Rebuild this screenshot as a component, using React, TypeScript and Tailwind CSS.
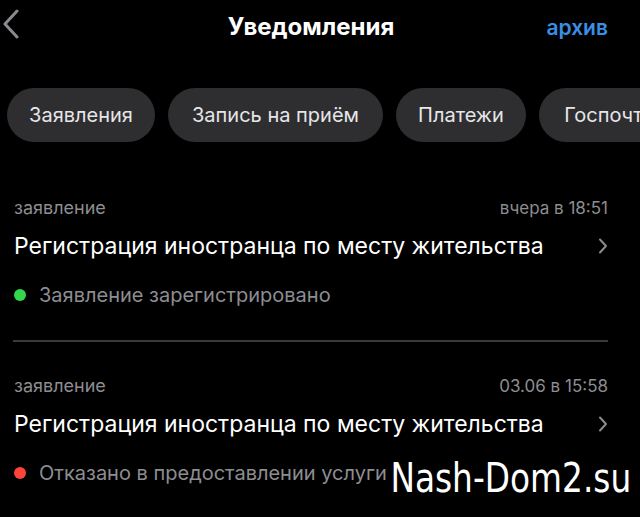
import React from "react";

function Item({ time, dot, status }: { time: string; dot: string; status: string }) {
  return (
    <div className="pl-[14px] pr-[32px]">
      <div className="flex justify-between h-[28px] text-[17px] text-[#8d8d92] leading-[28px]">
        <span className="text-[18px]">заявление</span>
        <span>{time}</span>
      </div>
      <div className="flex items-center justify-between h-[40px] mt-[4px]">
        <span className="text-[23px] text-white leading-none whitespace-nowrap">Регистрация иностранца по месту жительства</span>
        <svg width="10" height="16" viewBox="0 0 10 16" className="shrink-0">
          <path d="M2 1.5 L8 8 L2 14.5" stroke="#8a8a8f" strokeWidth="2" fill="none" strokeLinecap="round" strokeLinejoin="round" />
        </svg>
      </div>
      <div className="flex items-center h-[40px] mt-[9px]">
        <span className={`w-[12px] h-[12px] rounded-full shrink-0 ${dot}`} />
        <span className="ml-[13px] text-[20px] text-[#8d8d92] leading-none whitespace-nowrap">{status}</span>
      </div>
    </div>
  );
}

export default function App() {
  return (
    <div className="relative w-[640px] h-[517px] bg-black overflow-hidden" style={{ fontFamily: "Inter, Roboto, sans-serif" }}>
      <div className="relative flex items-center justify-center h-[50px]">
        <svg width="20" height="30" viewBox="0 0 20 30" className="absolute left-[1px] top-[9px]">
          <path d="M16 2 L4 15 L16 28" stroke="#8a8a8f" strokeWidth="3" fill="none" strokeLinecap="round" strokeLinejoin="round" />
        </svg>
        <span className="text-[24px] font-bold text-white mr-[18px] mt-[4px]">Уведомления</span>
        <span className="absolute right-[32px] top-[12px] text-[21px] font-semibold text-[#3a8ee3]">архив</span>
      </div>
      <div className="flex gap-[13px] pl-[7px] mt-[38px] whitespace-nowrap">
        {[
          ["Заявления", "w-[148px]"],
          ["Запись на приём", "w-[215px]"],
          ["Платежи", "w-[130px]"],
          ["Госпочта", "w-[140px]"],
        ].map(([t, w]) => (
          <div key={t} className={`h-[54px] ${w} rounded-full bg-[#2e2e31] flex items-center justify-center text-[20px] text-[#e6e6e8] shrink-0`}>
            {t}
          </div>
        ))}
      </div>
      <div className="mt-[52px]">
        <Item time="вчера в 18:51" dot="bg-[#32d74b]" status="Заявление зарегистрировано" />
        <div className="ml-[13px] mr-[32px] h-[2px] bg-[#3a3a3d] mt-[25px]" />
        <div className="mt-[30px]">
          <Item time="03.06 в 15:58" dot="bg-[#ff453a]" status="Отказано в предоставлении услуги" />
        </div>
      </div>
      <div
        className="absolute left-[388px] top-[458px] text-[41px] text-white leading-none origin-left bg-black pl-[3px] whitespace-nowrap"
        style={{ fontFamily: "'DejaVu Sans', sans-serif", transform: "scaleX(0.8)" }}
      >
        Nash-Dom2.su
      </div>
    </div>
  );
}
